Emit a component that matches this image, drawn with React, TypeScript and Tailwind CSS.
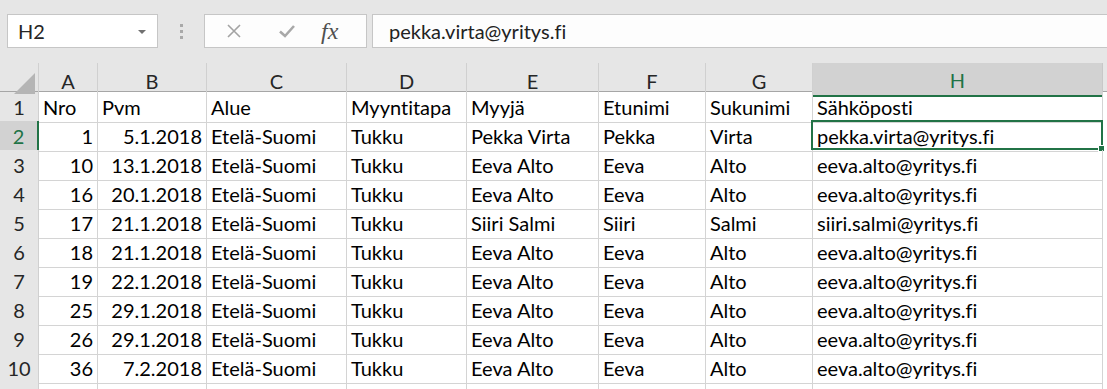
import React from "react";

const cols = ["A", "B", "C", "D", "E", "F", "G", "H"];

const rows: (string | number)[][] = [
  ["Nro", "Pvm", "Alue", "Myyntitapa", "Myyjä", "Etunimi", "Sukunimi", "Sähköposti"],
  [1, "5.1.2018", "Etelä-Suomi", "Tukku", "Pekka Virta", "Pekka", "Virta", "pekka.virta@yritys.fi"],
  [10, "13.1.2018", "Etelä-Suomi", "Tukku", "Eeva Alto", "Eeva", "Alto", "eeva.alto@yritys.fi"],
  [16, "20.1.2018", "Etelä-Suomi", "Tukku", "Eeva Alto", "Eeva", "Alto", "eeva.alto@yritys.fi"],
  [17, "21.1.2018", "Etelä-Suomi", "Tukku", "Siiri Salmi", "Siiri", "Salmi", "siiri.salmi@yritys.fi"],
  [18, "21.1.2018", "Etelä-Suomi", "Tukku", "Eeva Alto", "Eeva", "Alto", "eeva.alto@yritys.fi"],
  [19, "22.1.2018", "Etelä-Suomi", "Tukku", "Eeva Alto", "Eeva", "Alto", "eeva.alto@yritys.fi"],
  [25, "29.1.2018", "Etelä-Suomi", "Tukku", "Eeva Alto", "Eeva", "Alto", "eeva.alto@yritys.fi"],
  [26, "29.1.2018", "Etelä-Suomi", "Tukku", "Eeva Alto", "Eeva", "Alto", "eeva.alto@yritys.fi"],
  [36, "7.2.2018", "Etelä-Suomi", "Tukku", "Eeva Alto", "Eeva", "Alto", "eeva.alto@yritys.fi"],
  ["", "", "", "", "", "", "", ""],
];

// numbers and dates sit on the right, like in Excel
function isRight(r: number, c: number) {
  return r > 0 && (c === 0 || c === 1) && rows[r][c] !== "";
}

const grid = "grid grid-cols-[39px_59px_109px_140px_120px_132px_107px_107px_290px_1fr]";

export default function App() {
  return (
    <div className="h-[389px] w-[1107px] overflow-hidden bg-white font-['Lato',sans-serif] text-[20px] text-black [font-variant-ligatures:none]">
      {/* formula bar */}
      <div className="flex h-[63px] bg-[#e6e6e6] pl-[7px] pt-[14px]">
        <div className="flex h-[34px] w-[151px] items-center justify-between border border-[#c6c6c6] bg-white pl-[10px] pr-[11px]">
          <span className="text-[#262626]">H2</span>
          <span className="mt-[2px] h-0 w-0 border-x-[4px] border-t-[4px] border-x-transparent border-t-[#707070]" />
        </div>
        <div className="flex h-[34px] w-[46px] flex-col items-center justify-center gap-[3px]">
          <span className="h-[3px] w-[3px] bg-[#a9a9a9]" />
          <span className="h-[3px] w-[3px] bg-[#a9a9a9]" />
          <span className="h-[3px] w-[3px] bg-[#a9a9a9]" />
        </div>
        <div className="flex h-[34px] w-[163px] items-center border border-[#c6c6c6] bg-[#fdfdfd]">
          <svg className="ml-[21px]" width="16" height="16" viewBox="0 0 16 16">
            <path d="M2 2 L14 14 M14 2 L2 14" stroke="#a3a3a3" strokeWidth="1.6" fill="none" />
          </svg>
          <svg className="ml-[36px]" width="18" height="16" viewBox="0 0 18 16">
            <path d="M2 8.5 L7 13 L16 3" stroke="#a8a8a8" strokeWidth="2.6" fill="none" />
          </svg>
          <span className="ml-[25px] font-['Liberation_Serif',serif] text-[24px] italic text-[#505050]">fx</span>
        </div>
        <div className="ml-[5px] flex h-[34px] flex-1 items-center border-y border-l border-[#c6c6c6] bg-[#fdfdfd] pl-[16px]">
          <span className="text-[#222]">pekka.virta@yritys.fi</span>
        </div>
      </div>

      {/* column headers */}
      <div className={grid + " h-[29px] border-b border-[#a6a6a6] bg-[#e6e6e6]"}>
        <div className="relative border-r border-[#d0d0d0]">
          <span className="absolute bottom-[3px] right-[3px] h-0 w-0 border-b-[21px] border-l-[21px] border-b-[#b5b5b5] border-l-transparent" />
        </div>
        {cols.map((c) =>
          c === "H" ? (
            <div
              key={c}
              className="flex items-center justify-center border-b-2 border-r border-b-[#217346] border-r-[#c8c8c8] bg-[#d2d2d2] pt-[2px] text-[#217346]"
            >
              {c}
            </div>
          ) : (
            <div key={c} className="flex items-center justify-center border-r border-[#d0d0d0] pt-[2px] text-[#262626]">
              {c}
            </div>
          )
        )}
        <div />
      </div>

      {/* rows */}
      {rows.map((row, r) => (
        <div key={r} className={grid + " h-[29px]"}>
          {r === 1 ? (
            <div className="flex items-center justify-center border-b border-r-2 border-b-[#c8c8c8] border-r-[#217346] bg-[#d2d2d2] text-[#217346]">
              {r + 1}
            </div>
          ) : (
            <div className="flex items-center justify-center border-b border-r border-[#d0d0d0] bg-[#e6e6e6] text-[#262626]">
              {r < 10 ? r + 1 : ""}
            </div>
          )}
          {row.map((v, c) => (
            <div
              key={c}
              className={
                "relative flex items-center overflow-visible whitespace-nowrap border-b border-r border-[#d4d4d4] px-[4px] " +
                (isRight(r, c) ? "justify-end" : "justify-start")
              }
            >
              {v}
              {r === 1 && c === 7 && (
                <span className="absolute -left-[2px] -top-[1px] h-[30px] w-[292px] border-2 border-[#217346]">
                  <span className="absolute -bottom-[4px] -right-[4px] h-[7px] w-[7px] border border-white bg-[#217346]" />
                </span>
              )}
            </div>
          ))}
          <div className="bg-white" />
        </div>
      ))}
    </div>
  );
}
